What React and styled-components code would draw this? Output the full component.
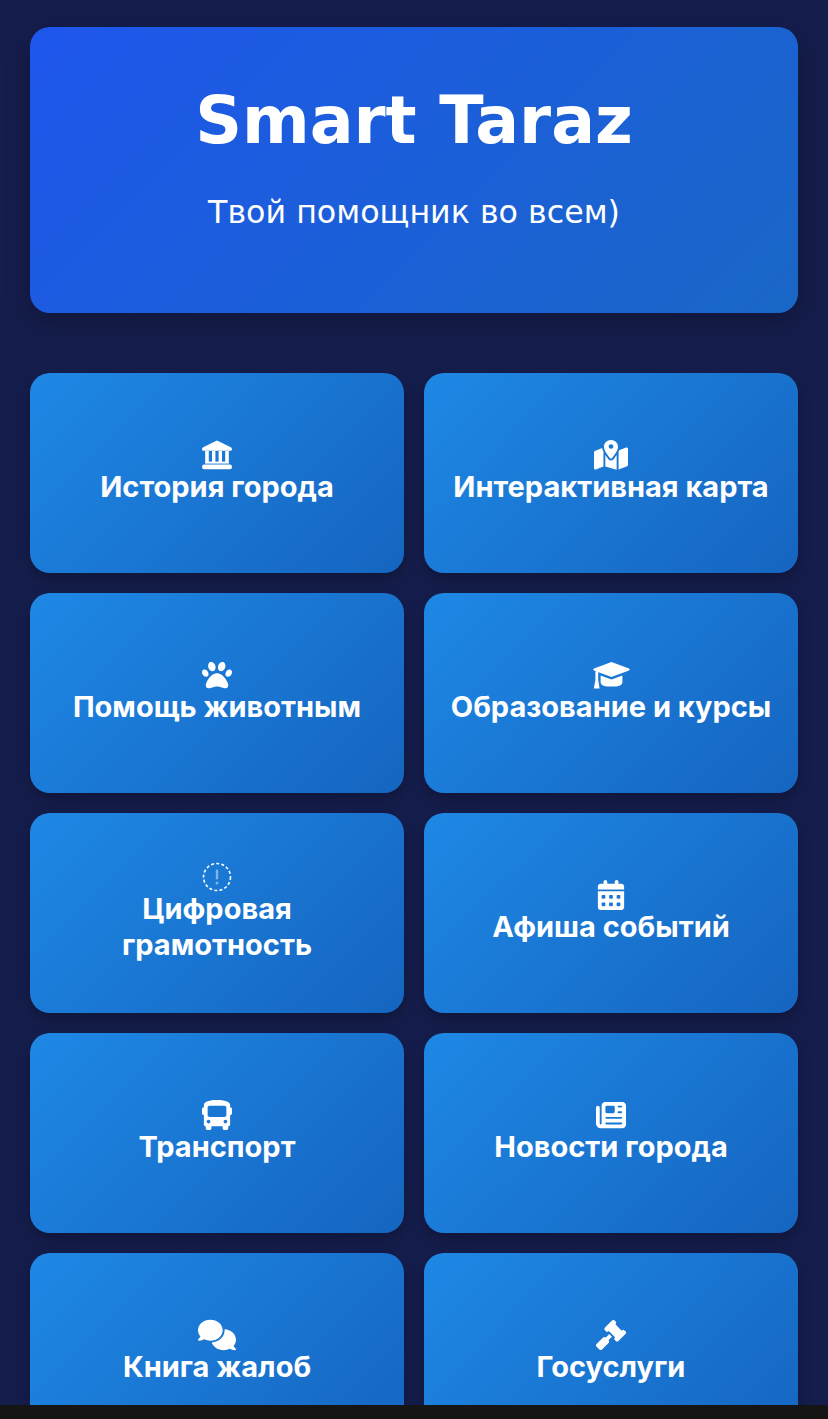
import styled, { createGlobalStyle } from 'styled-components';
import { FaBus } from 'react-icons/fa';
import {
  FaMapLocationDot,
  FaPaw,
  FaCalendarDays,
  FaNewspaper,
  FaComments,
  FaGavel,
} from 'react-icons/fa6';

const GlobalStyle = createGlobalStyle`
  html, body, #root {
    margin: 0;
    height: 100%;
  }

  body {
    background: #151515;
    overflow: hidden;
    font-family: 'Inter', 'Liberation Sans', sans-serif;
  }
`;

const Screen = styled.div`
  height: 1419px;
  display: flex;
  flex-direction: column;
`;

const Page = styled.main`
  flex: 1;
  min-height: 0;
  overflow: hidden;
  background: #151d4c;
  padding: 27px 30px 0;
`;

const BottomBar = styled.div`
  height: 14px;
  flex: none;
  background: #151515;
`;

const Hero = styled.header`
  height: 286px;
  box-sizing: border-box;
  margin-bottom: 60px;
  padding-top: 58px;
  border-radius: 20px;
  background: linear-gradient(135deg, #1e56ec 0%, #1967c6 100%);
  box-shadow: 0 8px 24px rgba(0, 0, 0, 0.25);
  color: #fff;
  text-align: center;
  font-family: 'DejaVu Sans', sans-serif;
`;

const Title = styled.h1`
  margin: 0 0 36px;
  font-size: 65px;
  line-height: 72px;
  font-weight: 700;
`;

const Subtitle = styled.p`
  margin: 0;
  font-size: 31.7px;
  line-height: 38px;
  font-weight: 400;
`;

const Grid = styled.nav`
  display: grid;
  grid-template-columns: 1fr 1fr;
  grid-auto-rows: 200px;
  gap: 20px;
`;

const Tile = styled.a`
  display: flex;
  flex-direction: column;
  align-items: center;
  justify-content: center;
  padding: 0 20px;
  border-radius: 20px;
  background: linear-gradient(135deg, #1e88e5 0%, #1565c0 100%);
  box-shadow: 0 6px 14px rgba(0, 0, 0, 0.25);
  color: #fff;
  text-align: center;
  font-size: 29px;
  line-height: 36px;
  font-weight: 700;
`;

const IconSlot = styled.span`
  height: 27px;
  display: flex;
  align-items: center;
  justify-content: center;

  svg {
    display: block;
    flex: none;
  }
`;

const LandmarkIcon = () => (
  <svg width="30" height="30" viewBox="0 0 30 30" fill="#fff">
    <path d="M15 0.5 L28.8 7.2 Q30 7.8 30 9.2 Q30 10.8 28.4 10.8 H1.6 Q0 10.8 0 9.2 Q0 7.8 1.2 7.2 Z" />
    <rect x="3.2" y="11" width="3.6" height="12" />
    <rect x="10" y="11" width="3.4" height="12" />
    <rect x="16.6" y="11" width="3.4" height="12" />
    <rect x="23.2" y="11" width="3.6" height="12" />
    <rect x="3.2" y="21.6" width="23.6" height="2" />
    <rect x="0" y="24.6" width="30" height="4.6" rx="2.2" />
  </svg>
);

const CapIcon = () => (
  <svg width="37" height="30" viewBox="0 0 37 30" fill="#fff">
    <path d="M18.5 2 L36 8.6 Q37.4 9.6 36 10.6 L18.5 17 L5.5 12.3 L4.6 12.2 L1 10.6 Q-0.4 9.6 1 8.6 Z" />
    <path d="M7.6 15.4 L18.5 19.4 L29.4 15.4 V22.4 Q29.4 26.6 18.5 26.6 Q7.6 26.6 7.6 22.4 Z" />
    <path d="M2.4 11.5 H5.2 V20 L6.6 28.6 H0.8 L2.4 20 Z" />
  </svg>
);

const DashedAlertIcon = () => (
  <svg width="30" height="30" viewBox="0 0 30 30" fill="none">
    <circle cx="15" cy="15" r="13.5" stroke="#fff" strokeWidth="1.6" strokeDasharray="3 2.2" />
    <rect x="13.8" y="7.5" width="2.4" height="10" rx="1.2" fill="#fff" fillOpacity="0.45" />
    <circle cx="15" cy="21" r="1.5" fill="#fff" fillOpacity="0.45" />
  </svg>
);

const tiles = [
  { label: 'История города', icon: <LandmarkIcon /> },
  { label: 'Интерактивная карта', icon: <FaMapLocationDot size={34} /> },
  { label: 'Помощь животным', icon: <FaPaw size={30} /> },
  { label: 'Образование и курсы', icon: <CapIcon /> },
  { label: 'Цифровая грамотность', icon: <DashedAlertIcon /> },
  { label: 'Афиша событий', icon: <FaCalendarDays size={30} /> },
  { label: 'Транспорт', icon: <FaBus size={30} /> },
  { label: 'Новости города', icon: <FaNewspaper size={30} /> },
  { label: 'Книга жалоб', icon: <FaComments size={38} /> },
  { label: 'Госуслуги', icon: <FaGavel size={30} /> },
];

const App = () => (
  <Screen>
    <GlobalStyle />
    <Page>
      <Hero>
        <Title>Smart Taraz</Title>
        <Subtitle>Твой помощник во всем)</Subtitle>
      </Hero>
      <Grid>
        {tiles.map((tile) => (
          <Tile key={tile.label}>
            <IconSlot>{tile.icon}</IconSlot>
            {tile.label}
          </Tile>
        ))}
      </Grid>
    </Page>
    <BottomBar />
  </Screen>
);

export default App;
